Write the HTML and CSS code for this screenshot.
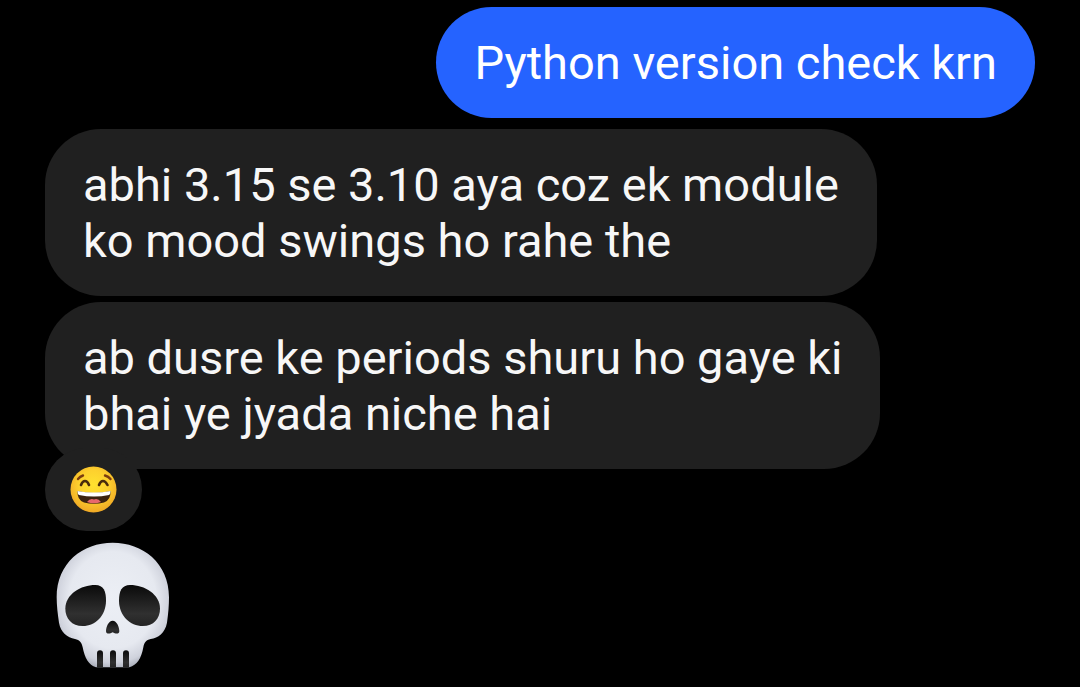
FILE: index.html
```
<!DOCTYPE html>
<html lang="en">
	<head>
		<meta charset="utf-8" />
		<meta name="viewport" content="width=device-width, initial-scale=1" />
		<title>Chat</title>
		<link rel="stylesheet" href="styles.css">
	</head>
	<body>
		<main class="chat">
			<p class="bubble sent">Python version check krn</p>
			<div class="group">
				<p class="bubble received">abhi 3.15 se 3.10 aya coz ek module<br>ko mood swings ho rahe the</p>
				<div class="message">
					<p class="bubble received">ab dusre ke periods shuru ho gaye ki<br>bhai ye jyada niche hai</p>
					<button class="reaction" type="button" aria-label="Grinning face reaction">
						<svg class="face" viewBox="0 0 48 48" aria-hidden="true">
							<defs>
								<radialGradient id="skin" cx="50%" cy="40%" r="65%">
									<stop offset="0" stop-color="#ffe22f" />
									<stop offset="0.5" stop-color="#fdd02e" />
									<stop offset="1" stop-color="#eda124" />
								</radialGradient>
							</defs>
							<circle cx="23.500" cy="23.500" r="23" fill="url(#skin)" />
							<g fill="none" stroke-linecap="round">
								<path d="M8 13Q10 10.500 13 9.500M35 9.500Q38.500 10.500 40.500 13" stroke="#7a3d10" stroke-width="2.400" />
								<path d="M11 19Q12.500 15 15 15T19 19M29 19Q30.500 15 33 15T37.500 19" stroke="#4a2c0c" stroke-width="2.600" />
							</g>
							<path d="M7.500 25Q24 29 40.500 25Q41 34 34 36.500Q24 39 14 36.500Q7 34 7.500 25Z" fill="#3b2310" />
							<path d="M7.500 25Q24 28 40.500 25Q40.500 28 39 29Q24 32 9 29Q7.500 28 7.500 25Z" fill="#fff" />
							<path d="M17 36Q20 32 24 33.500Q28 32 31 36Q24 38.500 17 36Z" fill="#e8686c" />
						</svg>
					</button>
				</div>
			</div>
			<svg class="skull" viewBox="0 0 342 378" role="img" aria-label="Skull">
				<defs>
					<radialGradient id="bone" cx="50%" cy="46%" r="57%">
						<stop offset="0" stop-color="#eceff5" />
						<stop offset="0.68" stop-color="#e6e9f0" />
						<stop offset="0.88" stop-color="#cfd2dc" />
						<stop offset="1" stop-color="#a4a8b4" />
					</radialGradient>
					<linearGradient id="socket" x1="0" y1="0" x2="0" y2="1">
						<stop offset="0" stop-color="#0a0a0a" />
						<stop offset="0.7" stop-color="#303030" />
						<stop offset="1" stop-color="#242424" />
					</linearGradient>
				</defs>
				<path d="M170 2C260 2 339 62 339 166C339 190 337 216 333 242C327 274 306 287 284 291C270 294 265 301 262 316C256 350 243 370 220 376H120C98 369 86 348 80 316C77 301 71 294 57 291C34 286 14 272 9 242C5 216 2 190 2 166C2 62 80 2 170 2Z" fill="url(#bone)" />
				<g fill="url(#socket)">
					<path d="M118 129C143 129 150 148 150 176C150 220 118 252 80 252C47 252 28 229 28 200C28 157 74 129 118 129Z" />
					<path d="M222 129C266 129 312 157 312 200C312 229 293 252 260 252C222 252 189 220 189 176C189 148 197 129 222 129Z" />
					<path d="M170 236C182 236 190 254 190 267C190 277 179 276 170 271C161 276 150 277 150 267C150 254 158 236 170 236Z" />
					<path d="M123 376V334Q123 325 132 325T141 334V376ZM162 376V334Q162 325 171 325T180 334V376ZM201 376V334Q201 325 210 325T219 334V376Z" />
				</g>
			</svg>
		</main>
	</body>
</html>
```
FILE: styles.css
```
* {
	box-sizing: border-box;
	margin: 0;
	padding: 0;
}

body {
	background: #000;
	color: #f7f7f7;
	font-family: Roboto, sans-serif;
	font-size: 47px;
	line-height: 56px;
}

.chat {
	display: flex;
	flex-direction: column;
	align-items: flex-start;
	gap: 11px;
	padding: 7px 45px;
}

.group {
	display: flex;
	flex-direction: column;
	align-items: flex-start;
	gap: 6px;
}

.bubble {
	width: fit-content;
	padding: 28px 38px 27px;
	border-radius: 56px;
}

.sent {
	align-self: flex-end;
	background: #2563ff;
	color: #fff;
}

.received {
	background: #202020;
}

/* the reaction hangs over the lower left corner of its message */
.reaction {
	position: relative;
	display: flex;
	align-items: center;
	justify-content: center;
	width: 97px;
	height: 83px;
	margin-top: -21px;
	border: 0;
	border-radius: 42px;
	background: #202020;
}

.face {
	width: 48px;
	height: 48px;
}

.skull {
	width: 114px;
	height: 126px;
	margin-left: 11px;
}
```
